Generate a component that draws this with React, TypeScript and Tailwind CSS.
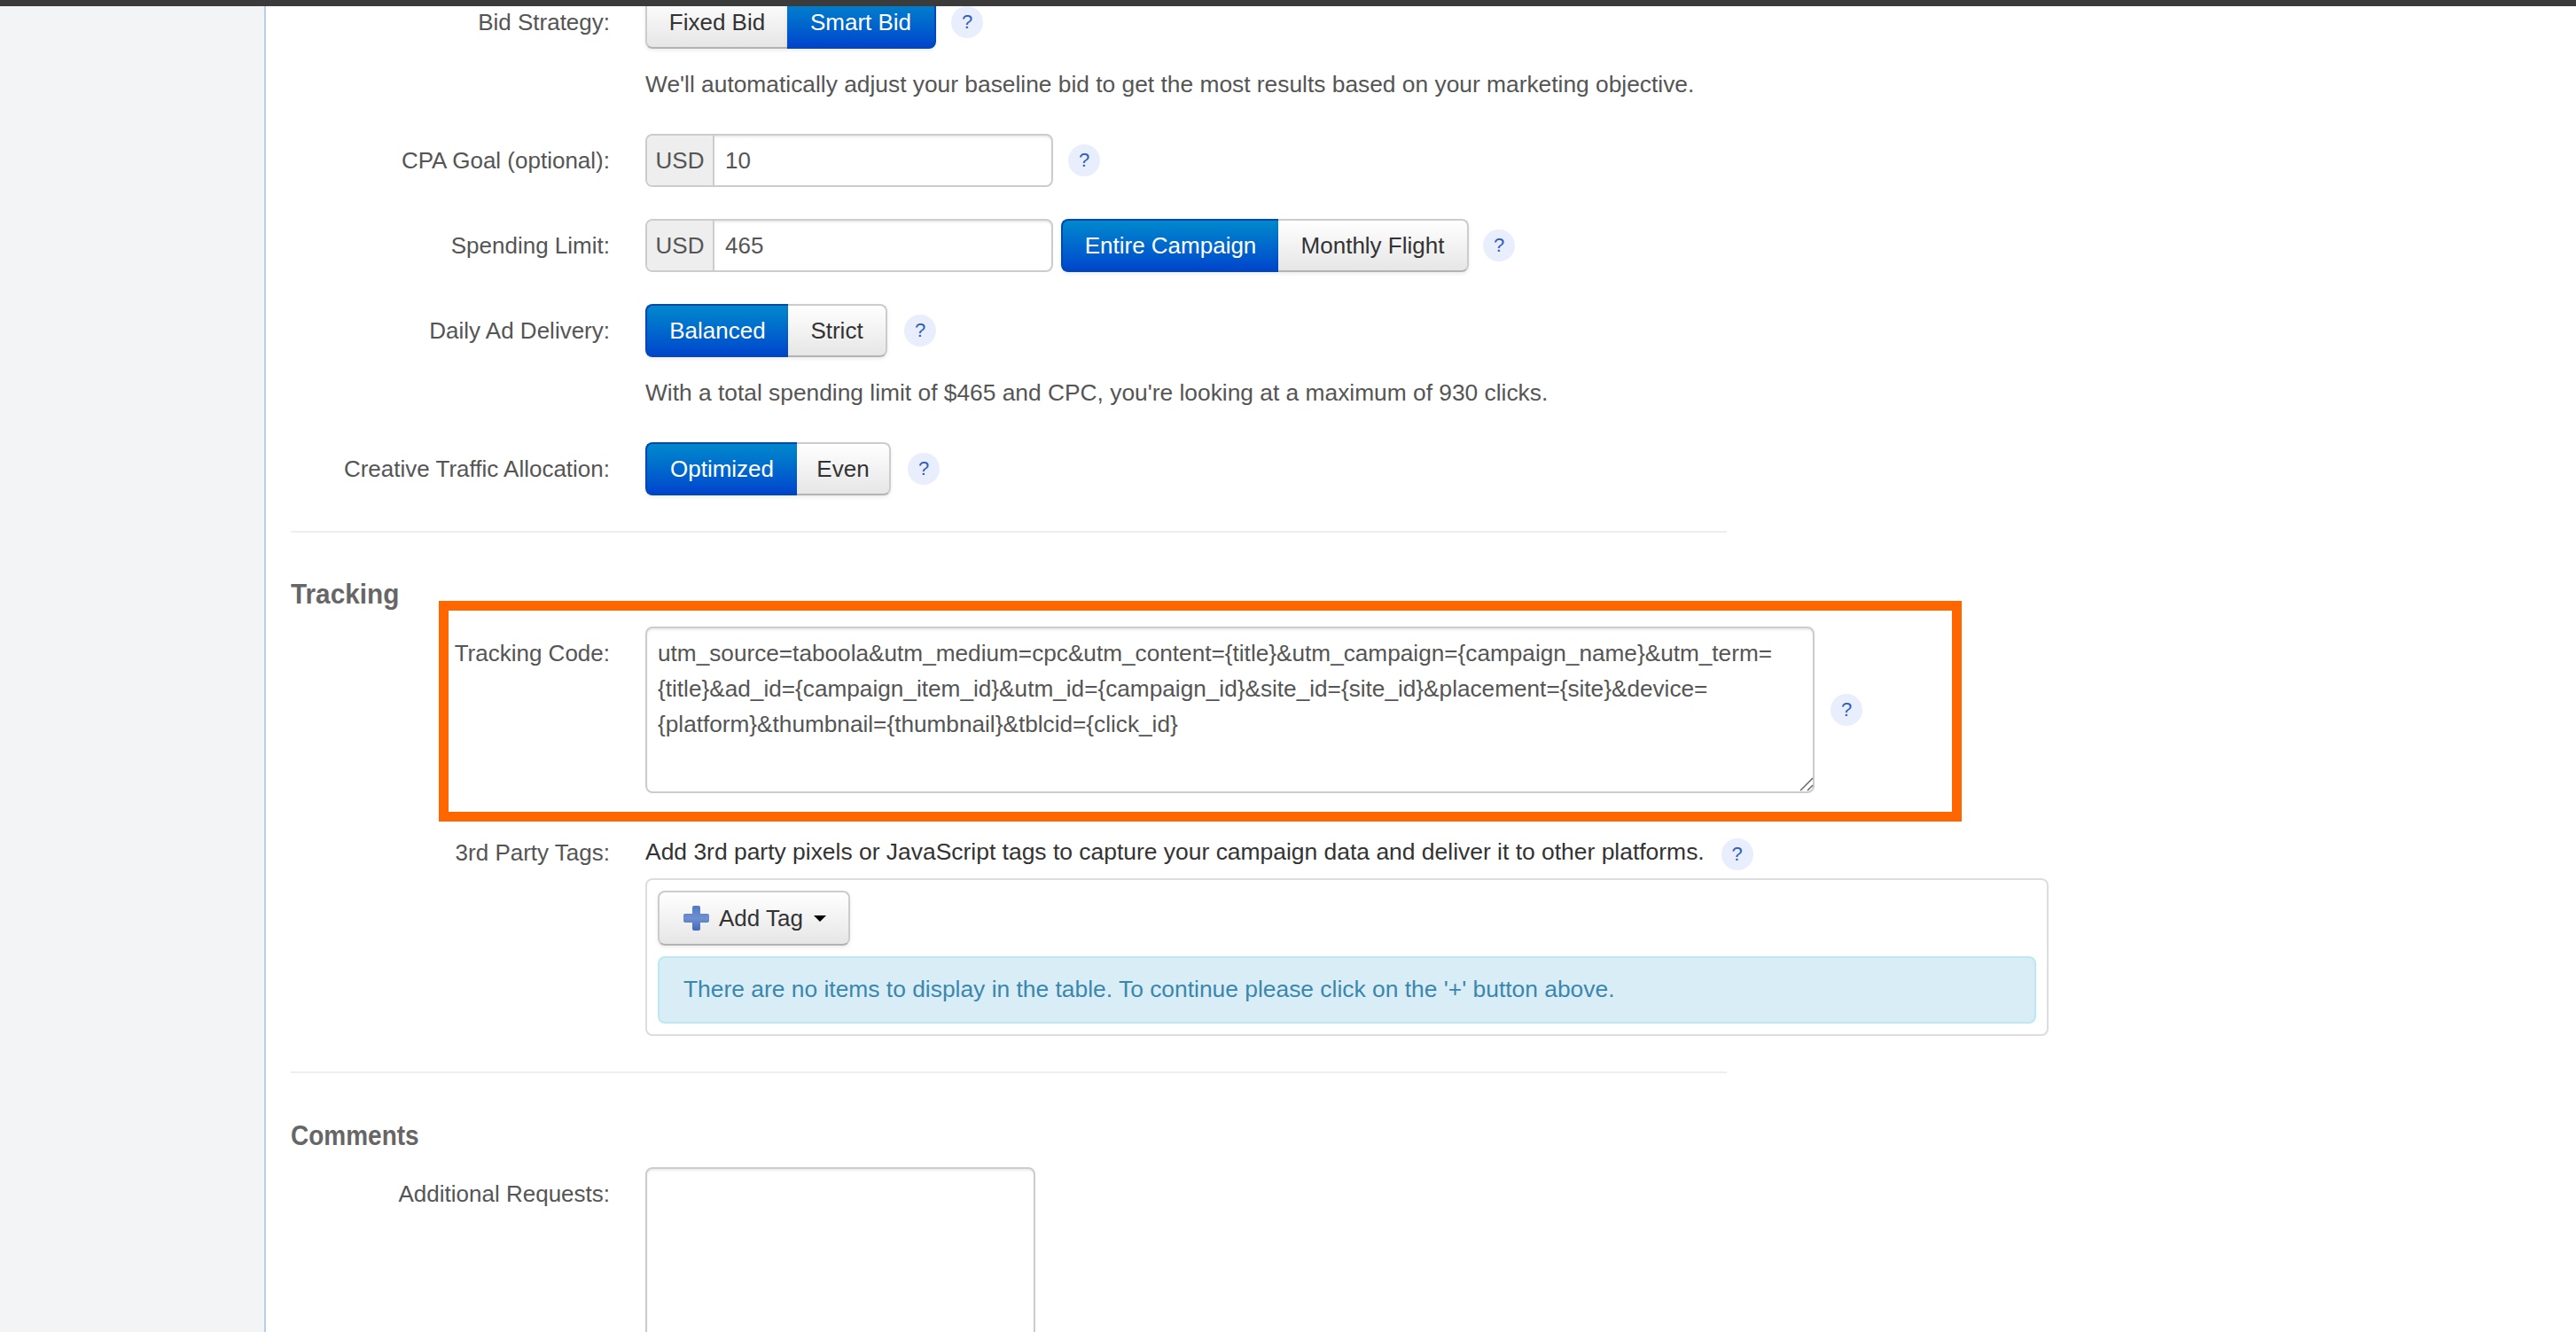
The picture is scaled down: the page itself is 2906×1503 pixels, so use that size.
const FONT = "font-['Liberation_Sans',Arial,sans-serif]";

function Help({ className = "" }: { className?: string }) {
  return (
    <span
      className={`flex h-[36px] w-[36px] shrink-0 items-center justify-center rounded-full bg-[#e8eefb] text-[22px] leading-none text-[#2f5fbf] ${className}`}
    >
      ?
    </span>
  );
}

function Seg({ label, active, className = "" }: { label: string; active?: boolean; className?: string }) {
  return (
    <span
      className={`flex h-[60px] items-center justify-center border-2 text-[26px] shadow-[0_2px_4px_rgba(0,0,0,0.08)] ${
        active
          ? "border-[#0048b8] bg-linear-to-b from-[#0088cc] to-[#0044cc] text-white"
          : "border-[#cccccc] border-b-[#b3b3b3] bg-linear-to-b from-white to-[#e6e6e6] text-[#333333]"
      } ${className}`}
    >
      {label}
    </span>
  );
}

function UsdInput({ value }: { value: string }) {
  return (
    <span className="flex h-[60px] w-[460px] overflow-hidden rounded-[8px] border-2 border-[#cccccc] bg-white text-[26px] text-[#555555] shadow-[inset_0_2px_2px_rgba(0,0,0,0.08)]">
      <span className="flex w-[76px] items-center justify-center border-r-2 border-[#cccccc] bg-[#eeeeee] text-[#555555]">
        USD
      </span>
      <span className="flex items-center pl-[12px]">{value}</span>
    </span>
  );
}

function Row({ label, children, className = "" }: { label: string; children: React.ReactNode; className?: string }) {
  return (
    <div className={`flex h-[60px] items-center ${className}`}>
      <label className="w-[360px] shrink-0 pr-0 text-right text-[26px] text-[#555555]">{label}</label>
      <div className="ml-[40px] flex items-center">{children}</div>
    </div>
  );
}

function Note({ children, className = "" }: { children: React.ReactNode; className?: string }) {
  return <p className={`ml-[400px] text-[26.35px] leading-[40px] text-[#555555] ${className}`}>{children}</p>;
}

function Heading({ children, className = "" }: { children: React.ReactNode; className?: string }) {
  return (
    <h3 className={`origin-left text-[32px] leading-[40px] font-bold text-[#666666] ${className}`}>{children}</h3>
  );
}

const TRACKING =
  "utm_source=taboola&utm_medium=cpc&utm_content={title}&utm_campaign={campaign_name}&utm_term=\n{title}&ad_id={campaign_item_id}&utm_id={campaign_id}&site_id={site_id}&placement={site}&device=\n{platform}&thumbnail={thumbnail}&tblcid={click_id}";

export default function App() {
  return (
    <div className={`flex h-[1503px] w-[2906px] flex-col overflow-hidden bg-white ${FONT}`}>
      <div className="relative z-10 h-[7px] shrink-0 bg-[#3b3b3b]" />
      <div className="flex min-h-0 flex-1">
        <aside className="w-[300px] shrink-0 border-r-2 border-[#b9cfe6] bg-[#f3f4f6]" />
        <main className="flex-1 pl-[28px]">
          <div className="-mt-[12px]">
            <Row label="Bid Strategy:">
              <Seg label="Fixed Bid" className="w-[160px] rounded-l-[8px] border-r-0" />
              <Seg label="Smart Bid" active className="w-[168px] rounded-r-[8px] border-l-0" />
              <Help className="ml-[17px]" />
            </Row>
            <Note className="mt-[20px]">
              We'll automatically adjust your baseline bid to get the most results based on your marketing objective.
            </Note>
            <Row label="CPA Goal (optional):" className="mt-[36px]">
              <UsdInput value="10" />
              <Help className="ml-[17px]" />
            </Row>
            <Row label="Spending Limit:" className="mt-[36px]">
              <UsdInput value="465" />
              <Seg label="Entire Campaign" active className="ml-[9px] w-[245px] rounded-l-[8px] border-r-0" />
              <Seg label="Monthly Flight" className="w-[215px] rounded-r-[8px] border-l-0" />
              <Help className="ml-[16px]" />
            </Row>
            <Row label="Daily Ad Delivery:" className="mt-[36px]">
              <Seg label="Balanced" active className="w-[161px] rounded-l-[8px] border-r-0" />
              <Seg label="Strict" className="w-[112px] rounded-r-[8px] border-l-0" />
              <Help className="ml-[19px]" />
            </Row>
            <Note className="mt-[20px]">
              With a total spending limit of $465 and CPC, you're looking at a maximum of 930 clicks.
            </Note>
            <Row label="Creative Traffic Allocation:" className="mt-[36px]">
              <Seg label="Optimized" active className="w-[171px] rounded-l-[8px] border-r-0" />
              <Seg label="Even" className="w-[106px] rounded-r-[8px] border-l-0" />
              <Help className="ml-[19px]" />
            </Row>

            <hr className="mt-[40px] h-[2px] w-[1620px] border-0 bg-[#eeeeee]" />

            <Heading className="mt-[49px] scale-x-[0.93]">Tracking</Heading>

            <div className="relative mt-[17px] flex items-start">
              <label className="w-[360px] shrink-0 pt-[10px] text-right text-[26px] leading-[40px] text-[#555555]">
                Tracking Code:
              </label>
              <textarea
                readOnly
                value={TRACKING}
                className="ml-[40px] h-[188px] w-[1319px] resize-none rounded-[8px] border-2 border-[#cccccc] bg-white px-[12px] pt-[8px] text-[26.2px] leading-[40px] text-[#555555] shadow-[inset_0_2px_2px_rgba(0,0,0,0.08)] outline-none"
              />
              <Help className="mt-[76px] ml-[18px]" />
              {/* resize grip, drawn by hand so it reads like the reference */}
              <svg width="16" height="16" viewBox="0 0 16 16" className="absolute top-[170px] left-[1702px]">
                <path d="M1 15L15 1M9 15L15 9" stroke="#666666" strokeWidth="1.5" fill="none" />
              </svg>
              {/* annotation drawn over the form */}
              <div className="pointer-events-none absolute -top-[29px] left-[167px] h-[249px] w-[1718px] border-[11px] border-[#ff6600]" />
            </div>

            <div className="mt-[49px] flex h-[36px] items-center">
              <label className="w-[360px] shrink-0 text-right text-[26px] text-[#555555]">3rd Party Tags:</label>
              <span className="ml-[40px] text-[26.45px] text-[#333333]">
                Add 3rd party pixels or JavaScript tags to capture your campaign data and deliver it to other platforms.
              </span>
              <Help className="relative top-[2px] ml-[19px]" />
            </div>

            <div className="mt-[11px] ml-[400px] w-[1583px] rounded-[8px] border-2 border-[#dddddd] p-[12px]">
              <button
                type="button"
                className="flex h-[62px] w-[217px] items-center rounded-[8px] border-2 border-[#cccccc] border-b-[#b3b3b3] bg-linear-to-b from-white to-[#e6e6e6] pl-[27px] text-[26px] text-[#333333] shadow-[0_2px_4px_rgba(0,0,0,0.08)]"
              >
                <svg width="29" height="28" viewBox="0 0 29 28" className="shrink-0">
                  <defs>
                    <linearGradient id="plus" x1="0" y1="0" x2="0" y2="1">
                      <stop offset="0" stopColor="#4f79c4" />
                      <stop offset="0.5" stopColor="#6f8fd0" />
                      <stop offset="1" stopColor="#3f69b8" />
                    </linearGradient>
                  </defs>
                  <path
                    d="M12 0h5a2 2 0 0 1 2 2v7h8a2 2 0 0 1 2 2v6a2 2 0 0 1-2 2h-8v7a2 2 0 0 1-2 2h-5a2 2 0 0 1-2-2v-7H2a2 2 0 0 1-2-2v-6a2 2 0 0 1 2-2h8V2a2 2 0 0 1 2-2z"
                    fill="url(#plus)"
                  />
                </svg>
                <span className="ml-[11px]">Add Tag</span>
                <svg width="14" height="7" viewBox="0 0 14 7" className="ml-[12px] shrink-0">
                  <path d="M0 0h14L7 7z" fill="#000000" />
                </svg>
              </button>
              <div className="mt-[12px] flex h-[76px] items-center rounded-[8px] border-2 border-[#bce8f1] bg-[#d9edf7] pl-[27px] text-[26.4px] text-[#3a87ad]">
                There are no items to display in the table. To continue please click on the '+' button above.
              </div>
            </div>

            <hr className="mt-[40px] h-[2px] w-[1620px] border-0 bg-[#eeeeee]" />

            <Heading className="mt-[50px] scale-x-[0.875]">Comments</Heading>

            <div className="mt-[16px] flex items-start">
              <label className="w-[360px] shrink-0 pt-[10px] text-right text-[26px] leading-[40px] text-[#555555]">
                Additional Requests:
              </label>
              <div className="ml-[40px] h-[300px] w-[440px] rounded-[8px] border-2 border-[#cccccc] shadow-[inset_0_2px_2px_rgba(0,0,0,0.08)]" />
            </div>
          </div>
        </main>
      </div>
    </div>
  );
}
